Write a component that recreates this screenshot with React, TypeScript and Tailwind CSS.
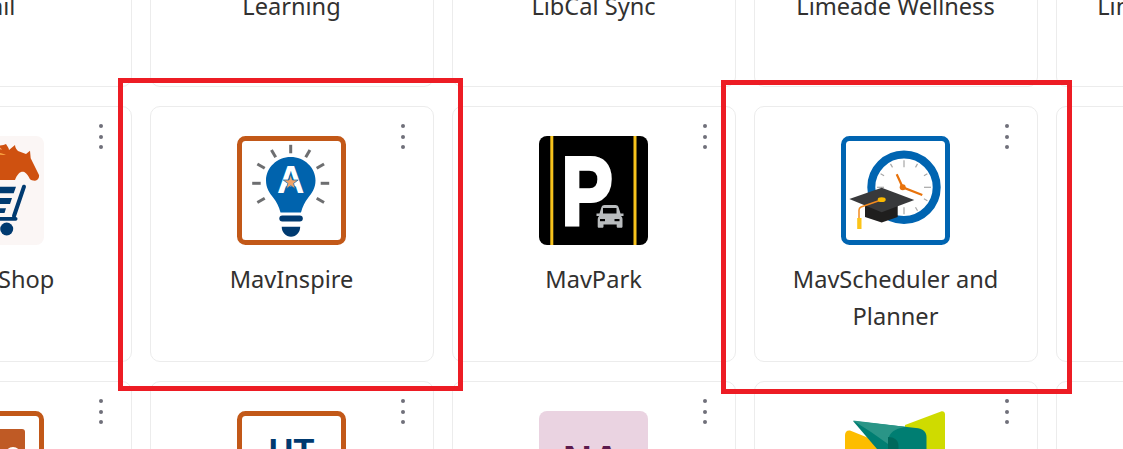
const rayAngles = [0, 30, 60, 90, 120, -30, -60, -90, -120];

function BulbIcon() {
  return (
    <svg viewBox="0 0 109 109" className="h-full w-full">
      <rect x="2.500" y="2.500" width="104" height="104" rx="6" fill="#fff" stroke="#c25818" strokeWidth="5" />
      {rayAngles.map((a) => {
        const r = (a * Math.PI) / 180;
        return (
          <line
            key={a}
            x1={53.7 + 30 * Math.sin(r)}
            y1={47.3 - 30 * Math.cos(r)}
            x2={53.7 + 38.5 * Math.sin(r)}
            y2={47.3 - 38.5 * Math.cos(r)}
            stroke="#6d6e70"
            strokeWidth="3"
          />
        );
      })}
      <path d="M53.700 21c-13.500 0-24.700 10.500-24.700 23.500 0 7.500 3.500 12.500 7.500 17.500 3 3.700 5.500 8.500 7 14.500h20.500c1.500-6 4-10.800 7-14.500 4-5 7.500-10 7.500-17.500C78.500 31.500 67.200 21 53.700 21z" fill="#0063ad" />
      <text x="53.700" y="57" textAnchor="middle" fontFamily="Liberation Sans, sans-serif" fontWeight="700" fontSize="38" fill="#fff">A</text>
      <polygon points="53.700,38.500 55.500,44 61.200,44 56.600,47.400 58.300,53 53.700,49.600 49.100,53 50.800,47.400 46.200,44 51.900,44" fill="#f0a368" stroke="#0063ad" strokeWidth="0.7" />
      <rect x="42.300" y="79.500" width="23.500" height="6" rx="3" fill="#003a70" />
      <path d="M44.700 90.700h18.500c0 5.500-4 10-9.200 10s-9.300-4.500-9.300-10z" fill="#003a70" />
    </svg>
  );
}

function ParkIcon() {
  return (
    <svg viewBox="0 0 109 109" className="h-full w-full">
      <rect width="109" height="109" rx="8" fill="#000" />
      <rect x="11.300" width="3" height="109" fill="#f7c31c" />
      <rect x="94.500" width="3" height="109" fill="#f7c31c" />
      <text transform="translate(22.500 88) scale(0.8 1)" fontFamily="Liberation Sans, sans-serif" fontWeight="700" fontSize="96" fill="#fff" stroke="#fff" strokeWidth="4">P</text>
      <g transform="translate(-5.500 1)">
        <path d="M63 76.500h3l2-6.500c.5-1.300 1.500-2 3-2h11c1.500 0 2.500.7 3 2l2 6.500h3v2.500h-2.500c1 1 1.500 2 1.500 3.500v7c0 .8-.5 1.300-1.200 1.300h-3.300c-.8 0-1.300-.5-1.300-1.300v-2H70v2c0 .8-.5 1.300-1.300 1.300h-3.300c-.7 0-1.200-.5-1.200-1.300v-7c0-1.500.5-2.500 1.500-3.500H63z" fill="#b9bcbe" />
        <rect x="69.500" y="71" width="13.500" height="5.500" fill="#000" />
        <rect x="66.500" y="82" width="5" height="2.200" fill="#000" />
        <rect x="81" y="82" width="5" height="2.200" fill="#000" />
      </g>
    </svg>
  );
}

function ClockIcon() {
  const ticks = Array.from({ length: 12 }, (_, i) => i * 30);
  return (
    <svg viewBox="0 0 109 109" className="h-full w-full">
      <rect x="2.500" y="2.500" width="104" height="104" rx="6" fill="#fff" stroke="#0064b1" strokeWidth="5" />
      <circle cx="63" cy="51.300" r="32.700" fill="#fff" stroke="#0064b1" strokeWidth="8" />
      {ticks.map((a) => {
        const r = (a * Math.PI) / 180;
        const long = a % 90 === 0;
        return (
          <line
            key={a}
            x1={63 + (long ? 20 : 23) * Math.sin(r)}
            y1={51.3 - (long ? 20 : 23) * Math.cos(r)}
            x2={63 + 27 * Math.sin(r)}
            y2={51.3 - 27 * Math.cos(r)}
            stroke="#a7a7a7"
            strokeWidth="1.200"
          />
        );
      })}
      <path d="M55.700 38.300L61.700 51.300L81.300 59" fill="none" stroke="#e8730c" strokeWidth="2.200" />
      <circle cx="61.700" cy="51.300" r="3" fill="#e8730c" />
      <polygon points="24,67 40.700,73 56.700,67 56.700,81 40.700,86.500 24,81" fill="#1f1e1e" />
      <polygon points="8.300,63 40.700,51.700 73.300,64 40.700,76.300" fill="#38393b" />
      <path d="M40.700 63.700L20 71c-1.500.6-2 1.500-2 3v9" fill="none" stroke="#f28a1e" strokeWidth="1.500" />
      <ellipse cx="40.700" cy="63.700" rx="4" ry="2.400" fill="#fbb900" />
      <rect x="16.200" y="82" width="4.300" height="11" fill="#fcc419" />
    </svg>
  );
}

function ShopIcon() {
  return (
    <svg viewBox="-65 0 109 109" className="h-full w-full">
      <rect x="-65" width="109" height="109" rx="8" fill="#fbf6f5" />
      <path d="M-30 22C-18 6 0 12 6 8c1 2 3 4 3 6 2-2 4-3 6-5 0 3 2 5 3 6l8 3 4-3.300.7 7.600L39 39c.6 3-1.500 5.700-4 5.700-2.500 0-4-.7-5-1.400-1.500-3.500-4-7-6.700-7.600-3-.4-6 2-8.300 8.300H-30z" fill="#cf5110" />
      <path d="M-12 14C-6 8 0 10 2 14c-4-2-8-1-14 0z" fill="#f6a66a" />
      <path d="M-4 18c3-2 6-1 10 1-4 0-7 0-10-1z" fill="#f9a03f" />
      <path d="M-30 50.700H16l-2.300 6.600H-28zM-24 62H12l-2 6H-22zM-18 72.300H6l-1.500 4.700H-16z" fill="#003a70" />
      <line x1="24" y1="50.700" x2="14" y2="80" stroke="#003a70" strokeWidth="4" strokeLinecap="round" />
      <rect x="-28" y="81" width="45.500" height="3.700" rx="1.800" fill="#003a70" />
      <circle cx="6.700" cy="93" r="6.500" fill="#003a70" />
      <circle cx="-20" cy="93" r="6.500" fill="#003a70" />
    </svg>
  );
}

function OrangeBlockIcon() {
  return (
    <svg viewBox="-65 0 109 109" className="h-full w-full">
      <rect x="-62.500" y="2.500" width="104" height="104" rx="6" fill="#fff" stroke="#c25818" strokeWidth="5" />
      <rect x="-50" y="18" width="75" height="75" rx="3" fill="#bf5a25" />
      <circle cx="13" cy="44" r="8" fill="#fff" />
    </svg>
  );
}

function UtIcon() {
  return (
    <svg viewBox="0 0 109 109" className="h-full w-full">
      <rect x="2.500" y="2.500" width="104" height="104" rx="6" fill="#fff" stroke="#c25818" strokeWidth="5" />
      <text x="54.500" y="51" textAnchor="middle" fontFamily="Liberation Sans, sans-serif" fontWeight="700" fontSize="34" fill="#003a70">UT</text>
    </svg>
  );
}

function NaIcon() {
  return (
    <svg viewBox="0 0 109 109" className="h-full w-full">
      <rect width="109" height="109" rx="8" fill="#ead3e1" />
      <text x="53" y="63" textAnchor="middle" fontFamily="Liberation Sans, sans-serif" fontWeight="700" fontSize="40" fill="#5c1a4d">NA</text>
    </svg>
  );
}

function PrismIcon() {
  return (
    <svg viewBox="0 0 109 109" className="h-full w-full">
      <path d="M64 14L100 .5c2-.7 4 .5 4 3V60H64z" fill="#cfdb00" />
      <path d="M4 24c0-3 2-5 5-4.500L50 36v40H4z" fill="#fdbd00" />
      <path d="M12 10L75 17c6 .7 10.500 3 10.500 9V66H60z" fill="#007e72" />
      <path d="M12 9.500L66 16c-9 .5-16 4-18 10L47 33L30 21z" fill="#2a9587" />
      <path d="M47 26c6 0 10.500 3 10.500 9v33H47z" fill="#00695c" />
    </svg>
  );
}

type CardProps = {
  label?: React.ReactNode;
  icon?: React.ReactNode;
  menu?: boolean;
  top?: boolean;
};

function Card({ label, icon, menu = true, top = false }: CardProps) {
  return (
    <div
      className={
        top
          ? "relative flex h-[254px] flex-col items-center rounded-[10px] border border-[#ececec] bg-white pl-[29px] pr-[30px] pt-[29px]"
          : "relative flex h-[256px] flex-col items-center rounded-[10px] border border-[#ececec] bg-white pl-[29px] pr-[30px] pt-[29px]"
      }
    >
      {menu && (
        <div className="absolute right-[28px] top-[17px] flex flex-col gap-[6.500px]">
          <span className="h-[4px] w-[4px] rounded-full bg-[#70707a]"></span>
          <span className="h-[4px] w-[4px] rounded-full bg-[#70707a]"></span>
          <span className="h-[4px] w-[4px] rounded-full bg-[#70707a]"></span>
        </div>
      )}
      <div className="h-[109px] w-[109px] shrink-0">{icon}</div>
      <p className="mt-[16px] text-center text-[23.600px] leading-[37px] text-[#323130]">{label}</p>
    </div>
  );
}

export default function App() {
  return (
    <div className="relative h-[449px] w-[1123px] overflow-hidden bg-white font-['Noto_Sans','Open_Sans',sans-serif]">
      <div className="-ml-[152px] -mt-[167px] grid w-[1492px] grid-cols-[repeat(5,284px)] gap-x-[18px] gap-y-[19px]">
        <Card top label={<span className="ml-[5px]">Mail</span>} menu={false} />
        <Card top label="Learning" menu={false} />
        <Card top label="LibCal Sync" menu={false} />
        <Card top label="Limeade Wellness" menu={false} />
        <Card top label="LinkedIn Learning" menu={false} />

        <Card label="Mav E-Shop" icon={<ShopIcon />} />
        <Card label="MavInspire" icon={<BulbIcon />} />
        <Card label="MavPark" icon={<ParkIcon />} />
        <Card label="MavScheduler and Planner" icon={<ClockIcon />} />
        <Card />

        <Card icon={<OrangeBlockIcon />} />
        <Card icon={<UtIcon />} />
        <Card icon={<NaIcon />} />
        <Card icon={<PrismIcon />} />
        <Card menu={false} />
      </div>

      {/* red highlight boxes */}
      <div className="absolute left-[118px] top-[78px] h-[313px] w-[345px] border-[5px] border-[#ed1c24]"></div>
      <div className="absolute left-[721px] top-[80px] h-[314px] w-[351px] border-[5px] border-[#ed1c24]"></div>
    </div>
  );
}
